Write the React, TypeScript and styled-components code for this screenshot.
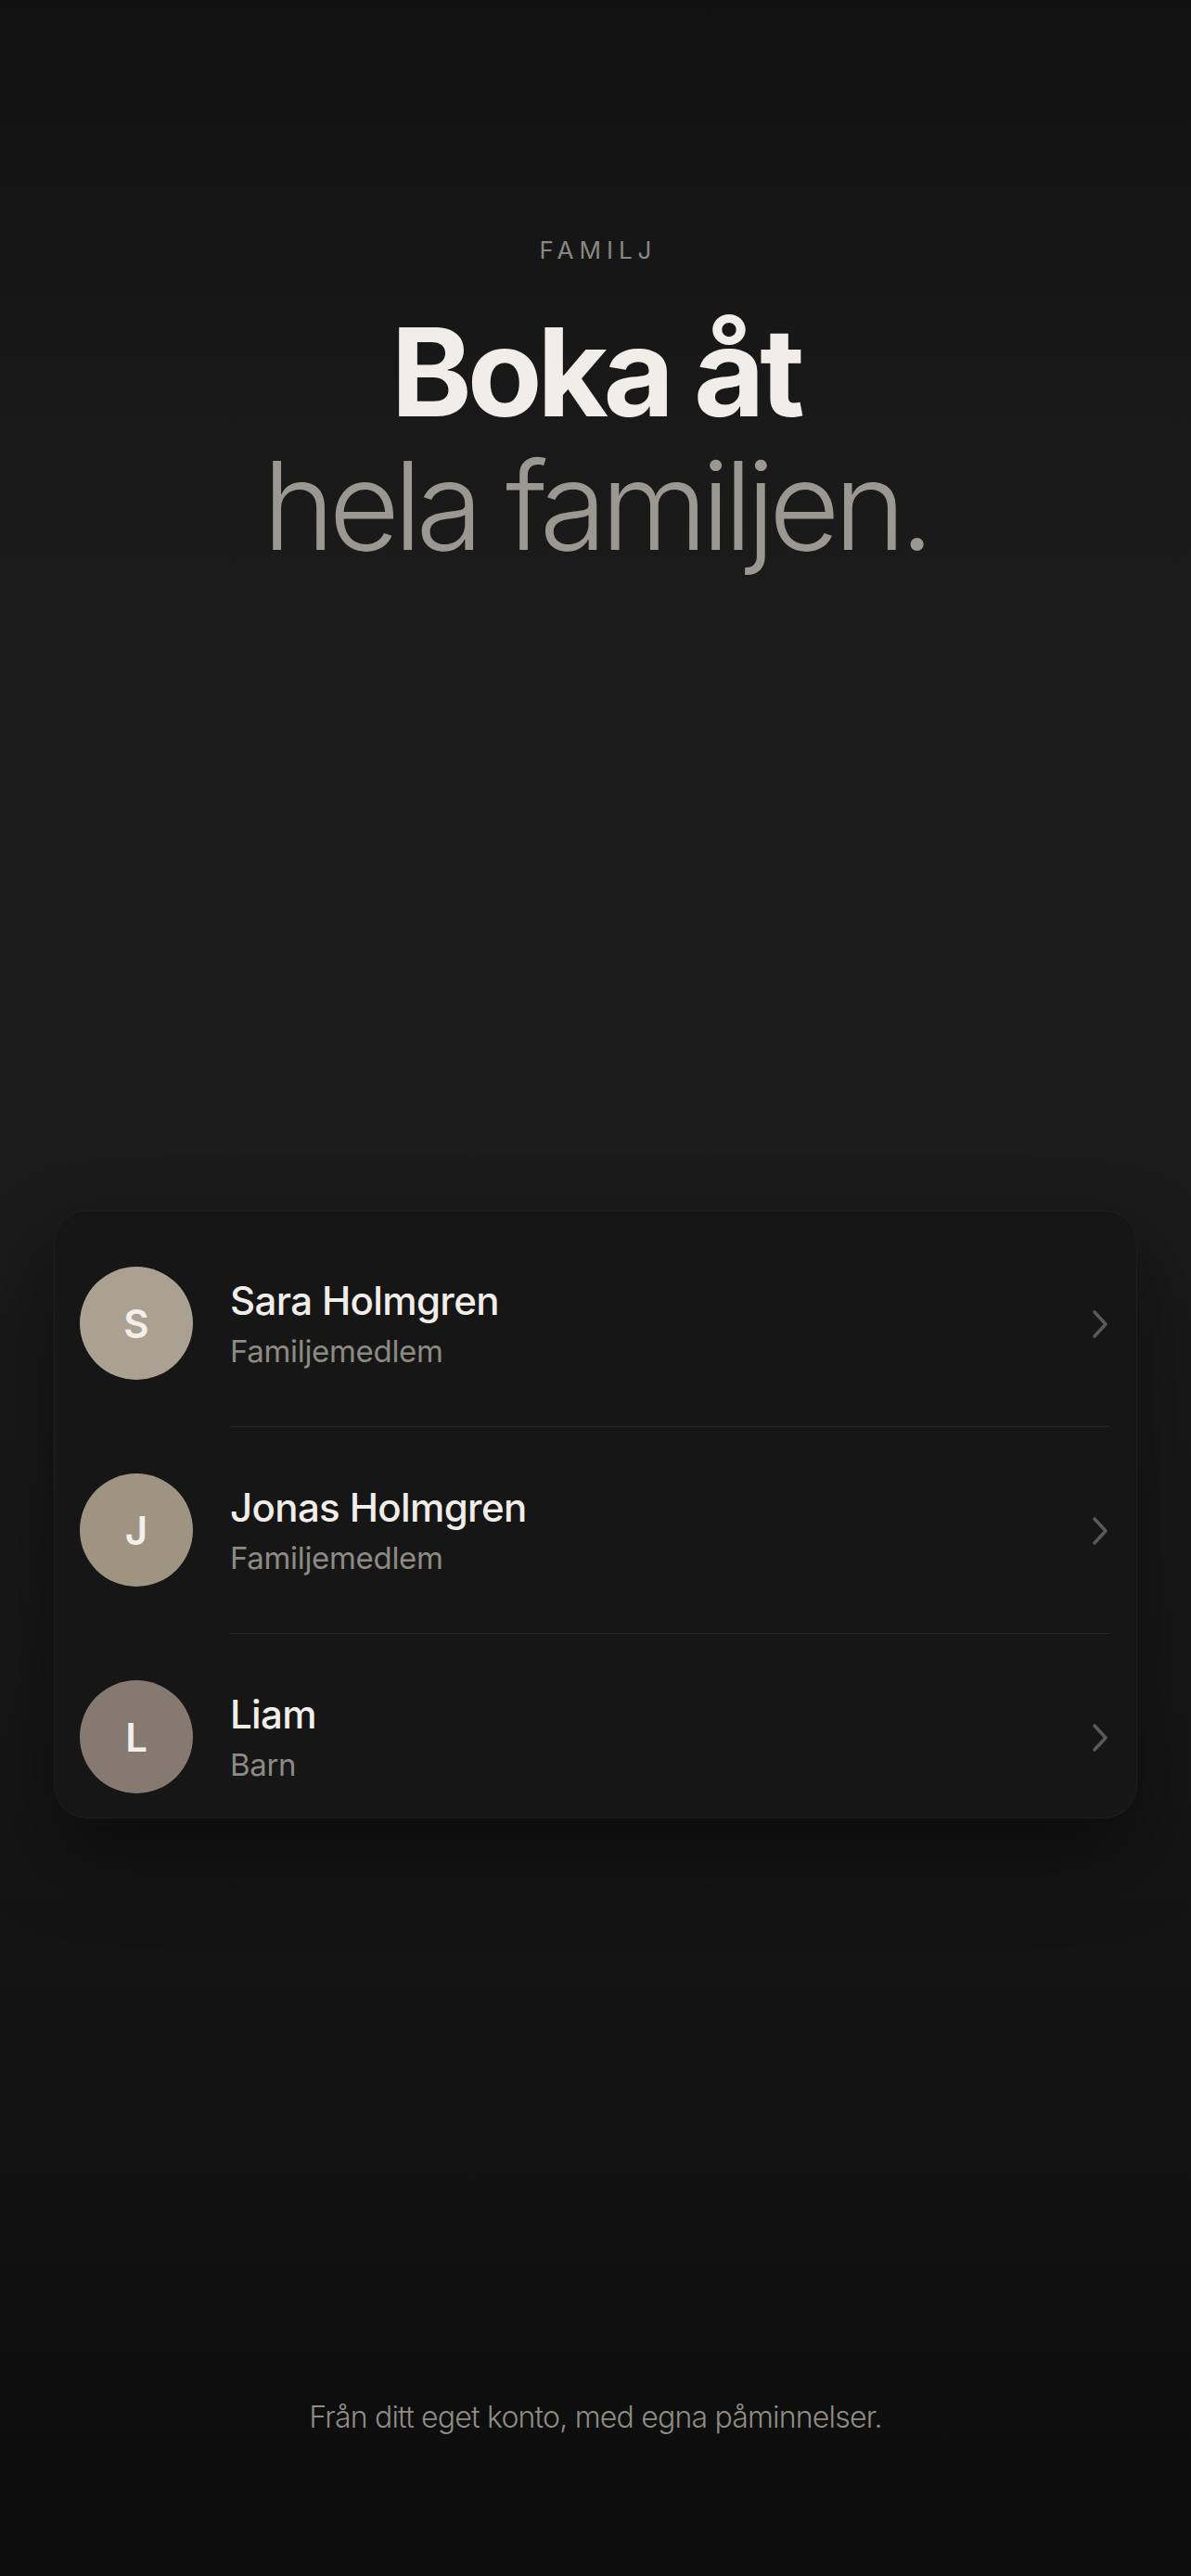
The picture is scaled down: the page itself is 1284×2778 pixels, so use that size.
import styled, { createGlobalStyle } from "styled-components";

const GlobalStyle = createGlobalStyle`
  html, body {
    margin: 0;
    padding: 0;
    background: #0e0e0e;
  }
  body {
    font-family: Inter, "Noto Sans", "Liberation Sans", sans-serif;
    -webkit-font-smoothing: antialiased;
  }
`;

type Member = {
  initial: string;
  name: string;
  role: string;
  tone: string;
};

const members: Array<Member> = [
  { initial: "S", name: "Sara Holmgren", role: "Familjemedlem", tone: "#aaa192" },
  { initial: "J", name: "Jonas Holmgren", role: "Familjemedlem", tone: "#9f9382" },
  { initial: "L", name: "Liam", role: "Barn", tone: "#867971" },
];

const Chevron = () => (
  <svg width="20" height="34" viewBox="0 0 20 34" fill="none">
    <path
      d="M4 4 L16 17 L4 30"
      stroke="#5b5956"
      strokeWidth="3.6"
      strokeLinecap="round"
      strokeLinejoin="round"
    />
  </svg>
);

const App = () => {
  return (
    <>
      <GlobalStyle />
      <Page>
        <Header>
          <Eyebrow>FAMILJ</Eyebrow>
          <Title>
            <strong>Boka åt</strong>
            <span>hela familjen.</span>
          </Title>
        </Header>

        <Card>
          {members.map((m, i) => (
            <Row key={m.name}>
              <Avatar $tone={m.tone}>{m.initial}</Avatar>
              <Body $last={i === members.length - 1}>
                <Info>
                  <Name>{m.name}</Name>
                  <Role>{m.role}</Role>
                </Info>
                <Chevron />
              </Body>
            </Row>
          ))}
        </Card>

        <Footer>Från ditt eget konto, med egna påminnelser.</Footer>
      </Page>
    </>
  );
};

const Page = styled.main`
  min-height: 2778px;
  box-sizing: border-box;
  display: flex;
  flex-direction: column;
  padding: 254px 58px 0;
  background: linear-gradient(
    180deg,
    #111111 0%,
    #191919 16%,
    #1c1c1c 30%,
    #1b1b1b 45%,
    #171717 65%,
    #121212 82%,
    #0c0c0c 100%
  );
`;

const Header = styled.header`
  display: flex;
  flex-direction: column;
  align-items: center;
  text-align: center;
`;

const Eyebrow = styled.div`
  font-size: 26px;
  line-height: 32px;
  letter-spacing: 0.23em;
  margin-right: -0.23em;
  color: #8a8781;
  font-weight: 400;
`;

const Title = styled.h1`
  margin: 43px 0 0;
  display: flex;
  flex-direction: column;
  font-size: 132px;
  line-height: 144px;
  letter-spacing: -0.04em;

  strong {
    font-weight: 700;
    color: #f1eee9;
  }

  span {
    font-weight: 300;
    letter-spacing: -0.05em;
    color: #9b9891;
  }
`;

const Card = styled.section`
  flex-shrink: 0;
  margin-top: 688px;
  padding-top: 10px;
  background: #161616;
  border: 1px solid rgba(255, 255, 255, 0.035);
  border-radius: 36px;
  box-shadow: 0 40px 90px rgba(0, 0, 0, 0.45);
  overflow: hidden;
`;

const Row = styled.div`
  display: flex;
  align-items: flex-start;
  padding: 0 29px 0 27px;
  column-gap: 40px;
`;

const Avatar = styled.div<{ $tone: string }>`
  flex: 0 0 auto;
  margin-top: 50px;
  width: 122px;
  height: 122px;
  border-radius: 50%;
  background: ${(p) => p.$tone};
  color: #f3f0eb;
  display: flex;
  align-items: center;
  justify-content: center;
  font-size: 42px;
  font-weight: 600;
`;

const Body = styled.div<{ $last: boolean }>`
  flex: 1;
  display: flex;
  align-items: center;
  justify-content: space-between;
  padding: 62px 0 ${(p) => (p.$last ? "37px" : "61px")};
  border-bottom: ${(p) => (p.$last ? "none" : "1px solid rgba(255, 255, 255, 0.07)")};
`;

const Info = styled.div`
  display: flex;
  flex-direction: column;
  row-gap: 9px;
`;

const Name = styled.div`
  font-size: 42px;
  line-height: 50px;
  font-weight: 500;
  letter-spacing: -0.015em;
  color: #f1eee9;
`;

const Role = styled.div`
  font-size: 33px;
  line-height: 40px;
  font-weight: 400;
  letter-spacing: -0.01em;
  color: #8d8a84;
`;

const Footer = styled.p`
  margin: 626px 0 0;
  text-align: center;
  font-size: 32px;
  line-height: 40px;
  font-weight: 300;
  letter-spacing: -0.025em;
  color: #8f8c86;
`;

export default App;
